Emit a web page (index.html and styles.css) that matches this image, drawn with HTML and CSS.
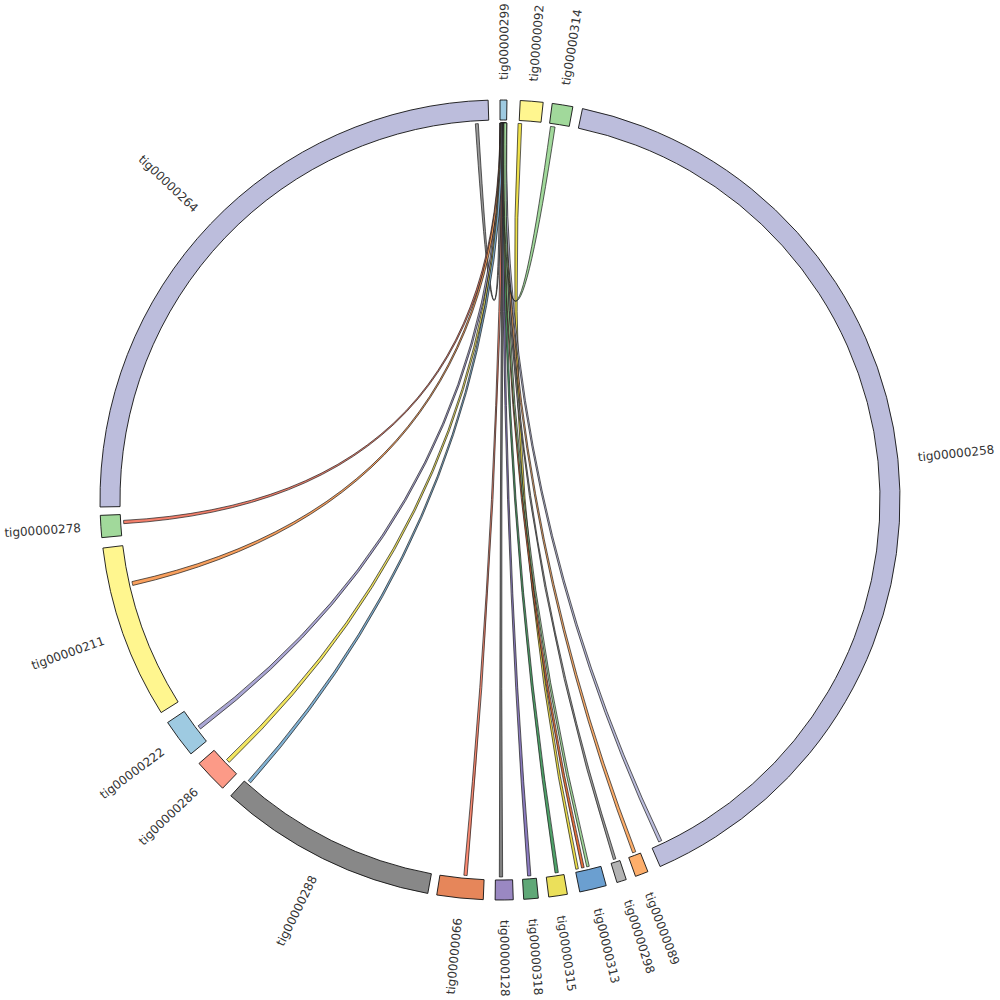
FILE: index.html
```html
<!DOCTYPE html>
<html lang="en">
<head>
<meta charset="utf-8">
<title>tig circos</title>
<link rel="stylesheet" href="styles.css">
</head>
<body>
<div class="chart">
  <svg id="circos" class="circos" width="1000" height="1000" viewBox="0 0 1000 1000" xmlns="http://www.w3.org/2000/svg">
    <g id="links" class="links"></g>
    <g id="segments" class="segments"></g>
    <g id="labels" class="labels"></g>
  </svg>
</div>
<script src="script.js"></script>
</body>
</html>
```
FILE: styles.css
```css
html, body {
  margin: 0;
  padding: 0;
  background: #ffffff;
}
.chart {
  width: 1000px;
  height: 1000px;
}
.circos {
  display: block;
}
.seg {
  stroke: #111111;
  stroke-width: 0.9;
}
.link {
  stroke: #1a1a1a;
  stroke-width: 0.7;
  stroke-linejoin: round;
}
.label {
  font-family: "DejaVu Sans", "Liberation Sans", sans-serif;
  font-size: 12px;
  fill: #333333;
}
```
FILE: script.js
```js
(function () {
  var NS = 'http://www.w3.org/2000/svg';
  var CX = 500, CY = 500, RO = 400, RI = 380, RL = 377, RT = 420;
  function rad(d) { return d * Math.PI / 180; }
  function pt(r, a) { return [CX + r * Math.sin(rad(a)), CY - r * Math.cos(rad(a))]; }
  function f(p) { return p[0].toFixed(2) + ' ' + p[1].toFixed(2); }

  var segments = [
    ['tig00000264', 269.0, 358.3, '#bcbddc'],
    ['tig00000299', 0.0, 1.0, '#9ecae1'],
    ['tig00000092', 2.9, 6.2, '#fff68f'],
    ['tig00000314', 7.5, 10.5, '#a1d99b'],
    ['tig00000258', 11.9, 156.4, '#bcbddc'],
    ['tig00000089', 158.3, 160.2, '#fdae6b'],
    ['tig00000298', 161.6, 163.0, '#b3b3b3'],
    ['tig00000313', 164.6, 168.5, '#6b9fd0'],
    ['tig00000315', 170.3, 173.0, '#ebe05a'],
    ['tig00000318', 174.5, 176.6, '#5fa877'],
    ['tig00000128', 178.1, 180.7, '#9a88c2'],
    ['tig00000066', 182.4, 189.1, '#e6865a'],
    ['tig00000288', 190.4, 222.3, '#888888'],
    ['tig00000286', 223.9, 228.8, '#fc9a87'],
    ['tig00000222', 230.6, 236.2, '#9ecae1'],
    ['tig00000211', 237.9, 263.1, '#fff68f'],
    ['tig00000278', 264.6, 267.8, '#a1d99b']
  ];

  // [s1, s2, t1, t2, color, controlRadius]
  var links = [
    [-3.75, -3.3, -0.05, 0.35, '#9a9a9a', 22.5],
    [0.0, 0.4, 266.4, 266.9, '#f4806c', 0],
    [0.05, 0.45, 256.9, 257.5, '#f9a05e', 0],
    [0.1, 0.5, 232.6, 233.2, '#aaa6d4', 0],
    [0.15, 0.55, 225.9, 226.5, '#f2e660', 0],
    [0.2, 0.6, 221.4, 221.9, '#80b1d3', 0],
    [0.3, 0.7, 185.0, 185.5, '#fb8a72', 0],
    [0.35, 0.75, 179.6, 180.1, '#808080', 0],
    [0.4, 0.8, 175.3, 175.8, '#8c7cc0', 0],
    [0.45, 0.85, 171.1, 171.6, '#4fa36a', 0],
    [2.75, 3.3, 168.0, 168.4, '#f0e24a', 0],
    [0.5, 0.9, 167.1, 167.5, '#e8703c', 0],
    [0.55, 0.95, 166.3, 166.7, '#a1d99b', 0],
    [0.6, 1.0, 162.1, 162.5, '#a0a0a0', 0],
    [0.65, 1.0, 158.9, 159.4, '#fdae6b', 0],
    [0.7, 1.05, 154.6, 155.1, '#bcbddc', 0],
    [7.7, 8.4, 0.6, 1.0, '#a1d99b', 22.5]
  ];

  var gl = document.getElementById('links');
  links.forEach(function (l) {
    var s1 = l[0], s2 = l[1], t1 = l[2], t2 = l[3];
    var mid = (s1 + s2 + t1 + t2) / 4;
    var c = pt(l[5], mid);
    var d = 'M' + f(pt(RL, s1)) +
      ' A' + RL + ' ' + RL + ' 0 0 1 ' + f(pt(RL, s2)) +
      ' Q' + f(c) + ' ' + f(pt(RL, t1)) +
      ' A' + RL + ' ' + RL + ' 0 0 1 ' + f(pt(RL, t2)) +
      ' Q' + f(c) + ' ' + f(pt(RL, s1)) + ' Z';
    var p = document.createElementNS(NS, 'path');
    p.setAttribute('d', d);
    p.setAttribute('class', 'link');
    p.setAttribute('fill', l[4]);
    gl.appendChild(p);
  });

  var gs = document.getElementById('segments');
  var gt = document.getElementById('labels');
  segments.forEach(function (s) {
    var a1 = s[1], a2 = s[2];
    var large = (a2 - a1) > 180 ? 1 : 0;
    var d = 'M' + f(pt(RO, a1)) +
      ' A' + RO + ' ' + RO + ' 0 ' + large + ' 1 ' + f(pt(RO, a2)) +
      ' L' + f(pt(RI, a2)) +
      ' A' + RI + ' ' + RI + ' 0 ' + large + ' 0 ' + f(pt(RI, a1)) + ' Z';
    var p = document.createElementNS(NS, 'path');
    p.setAttribute('d', d);
    p.setAttribute('class', 'seg');
    p.setAttribute('fill', s[3]);
    gs.appendChild(p);

    var mid = (a1 + a2) / 2;
    var m = ((mid % 360) + 360) % 360;
    var flip = m > 180 && m < 360;
    var rot = flip ? m + 90 : m - 90;
    var q = pt(RT, m);
    var t = document.createElementNS(NS, 'text');
    t.setAttribute('class', 'label');
    t.setAttribute('transform', 'translate(' + q[0].toFixed(2) + ',' + q[1].toFixed(2) + ') rotate(' + rot.toFixed(2) + ')');
    t.setAttribute('text-anchor', flip ? 'end' : 'start');
    t.setAttribute('dy', '0.35em');
    t.textContent = s[0];
    gt.appendChild(t);
  });
})();
```
